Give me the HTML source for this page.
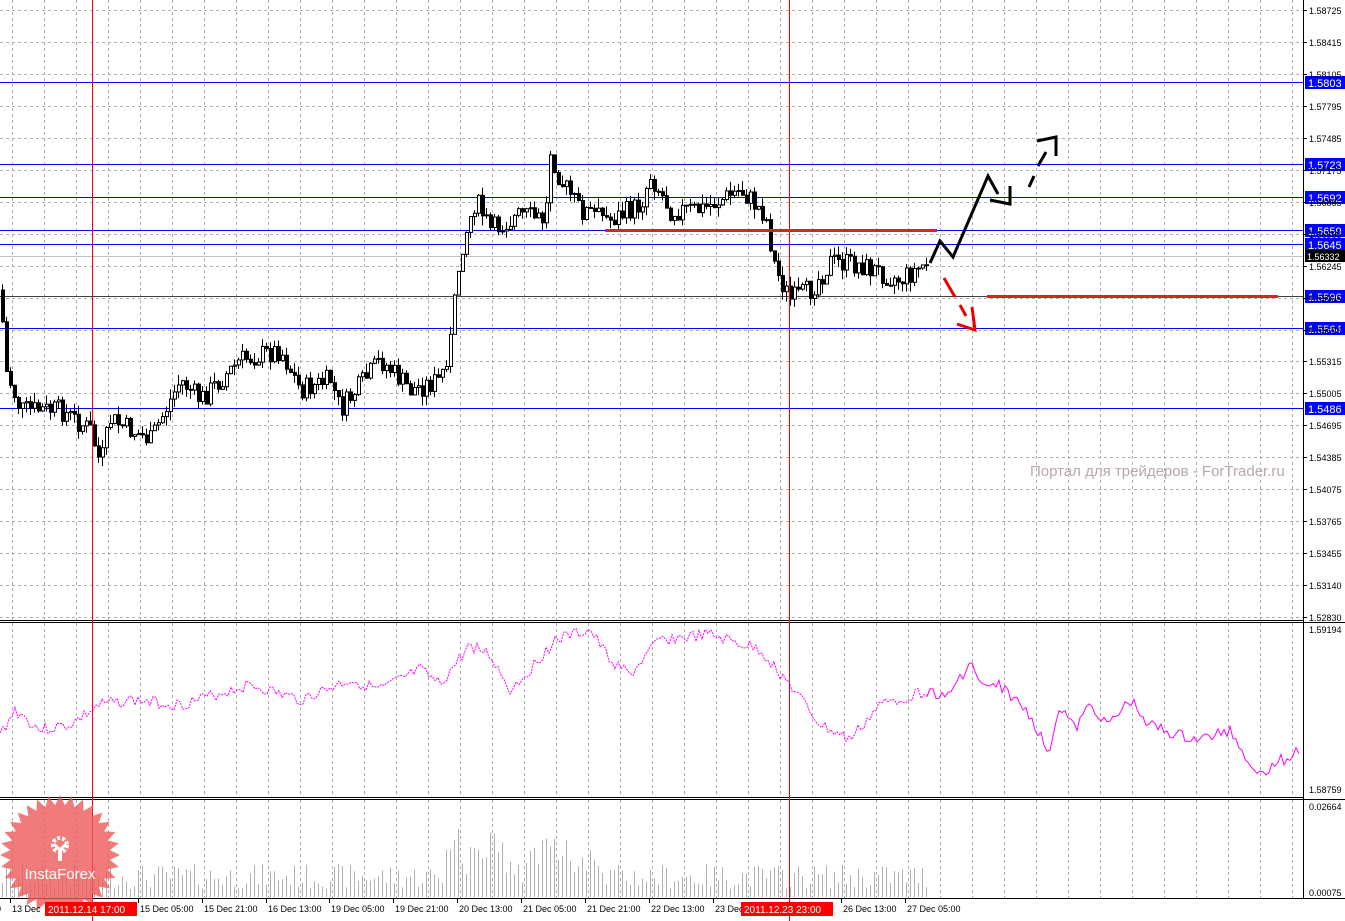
<!DOCTYPE html>
<html><head><meta charset="utf-8"><style>
html,body{margin:0;padding:0;background:#fff;}
svg{display:block;font-family:"Liberation Sans",sans-serif;}
</style></head><body>
<svg id="s" width="1345" height="921" xmlns="http://www.w3.org/2000/svg">
<rect width="1345" height="921" fill="#fff"/>
<g id="grid" stroke="#a8b4a8" stroke-dasharray="3,3" stroke-width="1"></g>
<g id="vol" stroke="#b0b0b0" stroke-width="1"></g>
<g id="hl"></g>
<g id="cndl"></g>
<polyline id="ind" fill="none" stroke="#ff00ff" stroke-width="1" stroke-dasharray="2,1"/>
<polyline id="ind2" fill="none" stroke="#ff00ff" stroke-width="1"/>
<g id="ax" font-size="9" fill="#000"></g>
<text x="1030" y="476" font-size="15" fill="#b8a8a8">Портал для трейдеров - ForTrader.ru</text>
<line x1="0" y1="620.5" x2="1303" y2="620.5" stroke="#000"/>
<line x1="0" y1="622.5" x2="1345" y2="622.5" stroke="#000"/>
<line x1="0" y1="797.5" x2="1303" y2="797.5" stroke="#000"/>
<line x1="0" y1="799.5" x2="1345" y2="799.5" stroke="#000"/>
<line x1="0" y1="898.5" x2="1345" y2="898.5" stroke="#000"/>
<line x1="1303.5" y1="0" x2="1303.5" y2="898" stroke="#000"/>
<line x1="92.5" y1="0" x2="92.5" y2="921" stroke="#f00"/>
<line x1="789.5" y1="0" x2="789.5" y2="921" stroke="#f00"/>
<g fill="none" stroke="#000" stroke-width="3">
<polyline points="930,263 940,241 953,257 988,176 998,194"/>
<polyline points="990,200 1010,204 1010,186"/>
<line x1="1029" y1="187" x2="1034" y2="176"/>
<line x1="1038" y1="166" x2="1046" y2="152"/>
<polyline points="1037,141 1056,137 1056,156"/>
</g>
<g fill="none" stroke="#e00" stroke-width="3">
<line x1="944" y1="278" x2="955" y2="297"/>
<line x1="960" y1="305" x2="966" y2="316"/>
<polyline points="957,324 975,330 972,307"/>
</g>
<rect x="605" y="229" width="332" height="3" fill="#e02020"/>
<rect x="987" y="295" width="291" height="3" fill="#e02020"/>
<g opacity="0.8">
<polygon id="star" fill="#ee5a5a"/>
</g>
<g fill="#fff" stroke="#fff">
<circle cx="60" cy="845" r="7" fill="none" stroke-width="4" stroke-dasharray="3,2"/>
<path d="M54 844 L60 850 L66 844" fill="none" stroke-width="3"/>
<rect x="58" y="849" width="4" height="12" stroke="none"/>
</g>
<text x="60" y="879" font-size="15" fill="#fff" text-anchor="middle">InstaForex</text>
<g id="tl" font-size="9" fill="#000"></g>
<rect x="45" y="902" width="92" height="14" fill="#f00"/>
<text x="48" y="913" font-size="10" fill="#fff">2011.12.14 17:00</text>
<rect x="741" y="902" width="92" height="14" fill="#f00"/>
<text x="744" y="913" font-size="10" fill="#fff">2011.12.23 23:00</text>
</svg>
<script>
(function(){
var NS="http://www.w3.org/2000/svg";
function el(p,t,a,txt){var e=document.createElementNS(NS,t);for(var k in a)e.setAttribute(k,a[k]);if(txt!=null)e.textContent=txt;document.getElementById(p).appendChild(e);return e;}
for(var x=12;x<1303;x+=32){el('grid','line',{x1:x+.5,y1:0,x2:x+.5,y2:620});el('grid','line',{x1:x+.5,y1:623,x2:x+.5,y2:797});el('grid','line',{x1:x+.5,y1:800,x2:x+.5,y2:898});}
for(var i=0;i<20;i++){var y=Math.round(10+i*31.95)+.5;el('grid','line',{x1:0,y1:y,x2:1303,y2:y});}
var pl=["1.58725","1.58415","1.58105","1.57795","1.57485","1.57175","1.56865","1.56555","1.56245","1.55935","1.55625","1.55315","1.55005","1.54695","1.54385","1.54075","1.53765","1.53455","1.53140","1.52830"];
for(var i=0;i<20;i++){var y=Math.round(10+i*31.95);el('ax','line',{x1:1303,y1:y+.5,x2:1307,y2:y+.5,stroke:'#000'});el('ax','text',{x:1309,y:y+4},pl[i]);}
el('ax','text',{x:1309,y:633},"1.59194");el('ax','text',{x:1309,y:793},"1.58759");
el('ax','text',{x:1309,y:810},"0.02664");el('ax','text',{x:1309,y:896},"0.00075");
var bl=[[82,"1.5803"],[164,"1.5723"],[197,"1.5692"],[230,"1.5659"],[244,"1.5645"],[328,"1.5564"],[408,"1.5486"]];
el('hl','line',{x1:0,y1:296.5,x2:1304,y2:296.5,stroke:'#404040'});
el('hl','line',{x1:0,y1:256.5,x2:1304,y2:256.5,stroke:'#c0c0c0'});
bl.forEach(function(b){el('hl','line',{x1:0,y1:b[0]+.5,x2:1304,y2:b[0]+.5,stroke:'#0000ff'});el('hl','rect',{x:1305,y:b[0]-6,width:40,height:13,fill:'#0000ff'});el('hl','text',{x:1308,y:b[0]+5,'font-size':11,fill:'#fff'},b[1]);});
el('hl','rect',{x:1305,y:290,width:40,height:13,fill:'#0000ff'});el('hl','text',{x:1308,y:301,'font-size':11,fill:'#fff'},"1.5596");
el('hl','rect',{x:1305,y:250,width:40,height:12,fill:'#000'});el('hl','text',{x:1307,y:260,'font-size':9,fill:'#fff'},"1.56332");
var kp=[[0,290],[5,370],[20,410],[60,410],[90,430],[100,465],[110,420],[150,440],[180,380],[200,400],[240,360],[280,350],[300,390],[330,380],[340,410],[380,360],[410,390],[440,380],[450,340],[460,250],[475,200],[490,230],[520,215],[545,220],[550,150],[560,180],[580,210],[610,220],[640,205],[650,175],[670,210],[700,210],[740,190],[765,215],[775,270],[790,300],[810,290],[830,262],[860,265],[900,280],[930,260]];
function f(x){for(var i=1;i<kp.length;i++){if(x<=kp[i][0]){var a=kp[i-1],b=kp[i];return a[1]+(b[1]-a[1])*(x-a[0])/(b[0]-a[0]);}}return 260;}
var seed=7;function r(){seed=(seed*9301+49297)%233280;return seed/233280;}
var prev=f(0);
for(var x=2;x<930;x+=4){var c=f(x)+(r()-.5)*22;var o=prev;var hi=Math.min(o,c)-r()*10,lo=Math.max(o,c)+r()*10;
el('cndl','line',{x1:x+.5,y1:hi,x2:x+.5,y2:lo,stroke:'#000'});
var tp=Math.min(o,c),h=Math.max(1,Math.abs(o-c));
el('cndl','rect',{x:x-.5,y:tp,width:3,height:h,fill:c<o?'#fff':'#000',stroke:'#000','stroke-width':1});
prev=c;
var vh=8+r()*25+(x>440&&x<600?r()*35:0)+(Math.abs(x-458)<3?45:0);
el('vol','line',{x1:x+.5,y1:897,x2:x+.5,y2:897-vh});}
var ik=[[0,735],[15,710],[40,730],[70,725],[100,705],[130,700],[180,705],[250,685],[300,700],[350,680],[380,690],[420,670],[440,685],[470,645],[490,655],[510,690],[530,670],[555,640],[590,630],[610,660],[630,675],[660,640],[710,635],[760,650],[790,685],[820,725],[850,740],[880,705],[930,690],[945,700],[970,663],[985,690],[1000,685],[1030,715],[1048,752],[1060,705],[1075,730],[1090,705],[1110,725],[1130,700],[1150,725],[1175,735],[1200,740],[1230,730],[1245,755],[1260,775],[1275,762],[1290,758],[1300,748]];
var p1=[],p2=[];seed=3;
for(var x=0;x<=1300;x+=3){var y;for(var i=1;i<ik.length;i++){if(x<=ik[i][0]){var a=ik[i-1],b=ik[i];y=a[1]+(b[1]-a[1])*(x-a[0])/(b[0]-a[0]);break;}}var s=x+","+(y+(r()-.5)*12).toFixed(1);if(x<=930)p1.push(s);if(x>=927)p2.push(s);}
document.getElementById('ind').setAttribute('points',p1.join(' '));
document.getElementById('ind2').setAttribute('points',p2.join(' '));
var sp=[];for(var i=0;i<64;i++){var a=i*Math.PI/32,rr=i%2?50:60;sp.push((60+rr*Math.cos(a)).toFixed(1)+","+(855+rr*Math.sin(a)).toFixed(1));}
document.getElementById('star').setAttribute('points',sp.join(' '));
var tl=[[-4,"0"],[12,"13 Dec"],[140,"15 Dec 05:00"],[204,"15 Dec 21:00"],[268,"16 Dec 13:00"],[331,"19 Dec 05:00"],[395,"19 Dec 21:00"],[459,"20 Dec 13:00"],[523,"21 Dec 05:00"],[587,"21 Dec 21:00"],[651,"22 Dec 13:00"],[715,"23 Dec"],[843,"26 Dec 13:00"],[907,"27 Dec 05:00"]];
tl.forEach(function(t){el('tl','line',{x1:t[0]-1.5,y1:899,x2:t[0]-1.5,y2:903,stroke:'#000'});el('tl','text',{x:t[0],y:912},t[1]);});
})();
</script>
</body></html>
